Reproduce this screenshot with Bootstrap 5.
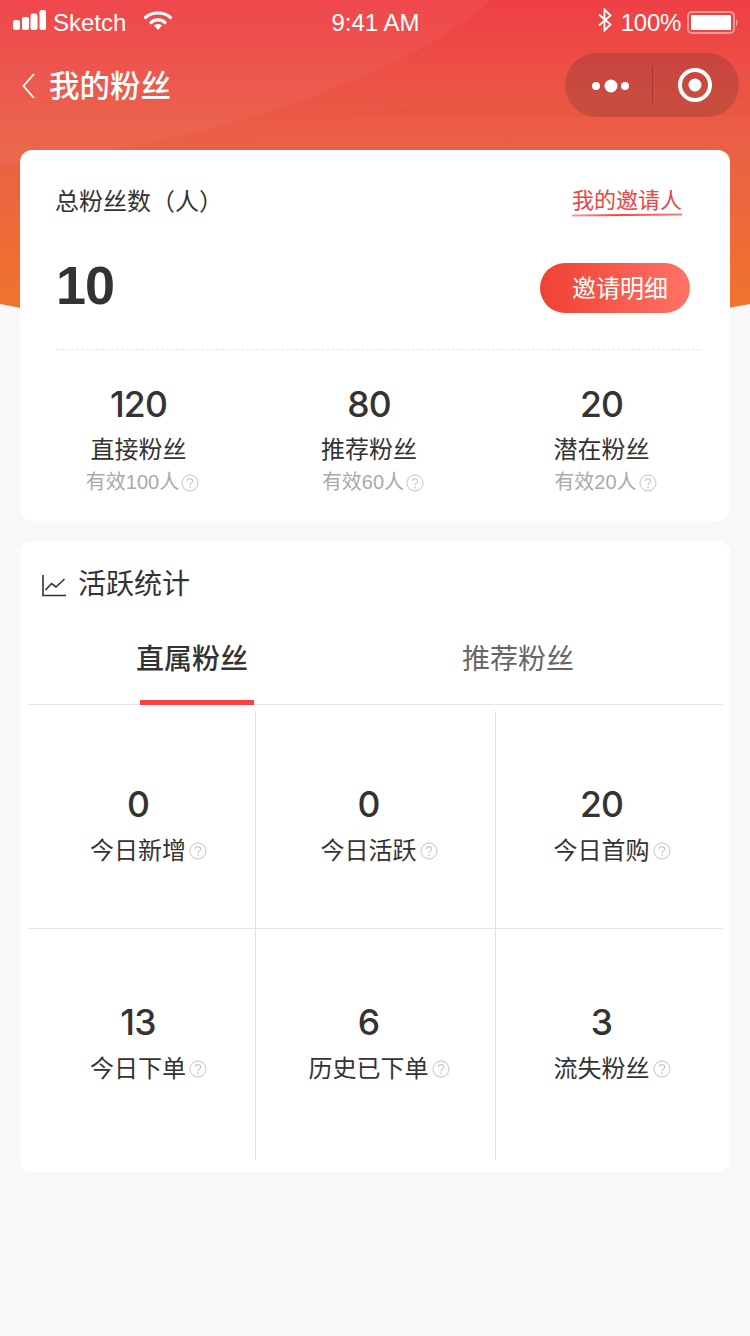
<!DOCTYPE html>
<html lang="zh-CN">
<head>
  <meta charset="UTF-8" />
  <title>我的粉丝</title>
  <meta name="viewport" content="width=device-width, initial-scale=1" />
  <link href="https://cdn.jsdelivr.net/npm/bootstrap@5.3.2/dist/css/bootstrap.min.css" rel="stylesheet" />
  <style>
    body {
      background-color: #f8f8f8;
      font-family: "Liberation Sans", "Noto Sans CJK SC", sans-serif;
      color: #333;
    }
    .page-wrap {
      position: relative;
      width: 750px;
      height: 1336px;
      overflow: hidden;
    }
    .hero-bg {
      position: absolute;
      top: 0;
      left: 0;
      z-index: 0;
    }
    .page-content {
      position: relative;
      z-index: 1;
    }

    .status-bar {
      display: grid;
      grid-template-columns: 1fr auto 1fr;
      height: 46px;
      padding: 0 11px 0 13px;
      color: #fff;
      font-size: 24px;
      line-height: 46px;
    }
    .status-bar svg {
      flex: none;
    }
    .status-signal {
      margin-top: -4px;
    }
    .status-name {
      margin-left: 6px;
    }
    .status-wifi {
      margin-top: -4px;
      margin-left: 18px;
    }
    .status-time {
      margin-left: -1px;
    }
    .status-blue {
      margin-top: -6px;
    }
    .status-pct {
      margin-left: 8px;
      letter-spacing: -.3px;
    }
    .status-batt {
      margin-left: 6px;
      margin-top: -1px;
    }
    .nav-title {
      height: 104px;
      padding: 7px 11px 0 22px;
    }
    .nav-title h1 {
      margin: 0 0 0 14px;
      font-size: 30.500px;
      font-weight: 500;
      line-height: 66px;
      color: #fff;
    }
    .capsule {
      width: 174px;
      height: 64px;
      border-radius: 32px;
      background: rgba(60, 40, 40, .2);
    }

    .panel {
      margin: 0 20px;
      border: 0;
      border-radius: 12px;
      background: #fff;
    }
    .total-head {
      padding: 35px 48px 0 35px;
      height: 68px;
      font-size: 24px;
      line-height: 34px;
    }
    .inviter {
      position: relative;
      height: 30px;
      margin-top: -1px;
      font-size: 22px;
      color: #ee4444;
    }
    .inviter::after {
      content: "";
      position: absolute;
      left: 0;
      right: 0;
      bottom: -1px;
      height: 1.500px;
      background: linear-gradient(90deg, #f79a9a, #f04848 40%, #f47c7c);
      transform: rotate(-.6deg);
    }
    .total-row {
      margin-top: 45px;
      padding: 0 40px 0 36px;
      height: 50px;
    }
    .total-num {
      margin-bottom: 6px;
      font-size: 54px;
      font-weight: 700;
      line-height: 44px;
      letter-spacing: -1px;
    }
    .invite-btn {
      width: 150px;
      height: 50px;
      padding: 2px 0 0 32px;
      border: 0;
      border-radius: 25px;
      background: linear-gradient(90deg, #ef4133, #fe7366);
      color: #fff;
      font-size: 24px;
      line-height: 48px;
      text-align: left;
    }
    .dash-line {
      margin: 36px 30px 0 36px;
      border-top: 1px dashed #e5e5e5;
    }

    .three-cols {
      display: grid;
      grid-template-columns: 228px 240px 227px;
      margin: 0 7px 0 8px;
    }
    .stat-num {
      margin-bottom: -1px;
      font-family: Inter, "Liberation Sans", sans-serif;
      font-size: 35.500px;
      font-weight: 500;
      line-height: 44px;
      letter-spacing: -.8px;
    }
    .stat-label {
      font-size: 24px;
      line-height: 34px;
    }
    .stat-sub {
      font-size: 20px;
      line-height: 28px;
      color: #aaa;
    }
    .top-stats {
      margin-top: 33px;
      padding-bottom: 25px;
    }
    .top-stats .stat-label {
      margin-top: 7px;
    }
    .top-stats .stat-sub {
      margin-top: 1px;
      padding-left: 8px;
    }
    .cell-a { padding-right: 7px; }
    .cell-b { padding-right: 14px; }
    .cell-c { padding-right: 16px; }

    .help-mark {
      display: inline-block;
      width: 18px;
      height: 18px;
      margin-left: 2px;
      vertical-align: -3px;
    }
    .stat-label .help-mark {
      margin-left: 3px;
      margin-right: -21px;
      vertical-align: -1px;
    }

    .section-head {
      padding: 24px 0 0 22px;
      font-size: 28px;
      line-height: 40px;
    }
    .section-head svg {
      margin-right: 12px;
    }
    .tab-row {
      display: grid;
      grid-template-columns: 328px 324px;
      margin: 15px 7px 0 8px;
      padding: 20px 0 24px;
      border-bottom: 1px solid #e5e5e5;
      position: relative;
      font-size: 28px;
      line-height: 40px;
      color: #666;
    }
    .tab-active {
      font-weight: 500;
      color: #333;
    }
    .tab-row::after {
      content: "";
      position: absolute;
      left: 112px;
      bottom: -1px;
      width: 114px;
      height: 5px;
      background: #ff4040;
    }
    .data-grid {
      margin-top: 6px;
      padding-bottom: 12px;
    }
    .grid-cell {
      padding-top: 72px;
      height: 218px;
      border-bottom: 1px solid #e5e5e5;
    }
    .grid-cell.low {
      height: 231px;
      padding-top: 72px;
      border-bottom: 0;
    }
    .grid-cell .stat-label {
      margin-top: 8px;
    }
    .line-right {
      border-right: 1px solid #e0e0e0;
    }
  </style>
</head>
<body>
  <div class="page-wrap">
    <svg class="hero-bg" width="750" height="380" viewBox="0 0 750 380" aria-hidden="true">
      <defs>
        <linearGradient id="heroGrad" x1="0" y1="0" x2="0" y2="1">
          <stop offset="0" stop-color="#ef3f44" />
          <stop offset=".42" stop-color="#ea6046" />
          <stop offset=".85" stop-color="#ef722e" />
        </linearGradient>
      </defs>
      <path d="M0 304 Q375 379 750 304 V0 H0 Z" fill="url(#heroGrad)" />
      <path d="M0 165 C170 150 390 90 492 0 H0 Z" fill="#fff" opacity=".045" />
      <path d="M310 117 H750 V106 H420 Z" fill="#d94a30" opacity=".1" />
    </svg>

    <div class="page-content">
      <div class="status-bar">
        <div class="d-flex align-items-center">
          <svg class="status-signal" width="34" height="22" viewBox="0 0 34 22" aria-hidden="true">
            <rect x="0" y="10" width="7" height="10" rx="2.500" fill="#fff" />
            <rect x="9" y="7" width="7" height="13" rx="2" fill="#fff" />
            <rect x="17.500" y="3.500" width="7" height="16.500" rx="2" fill="#fff" />
            <rect x="26.500" y="0" width="6.500" height="20" rx="2" fill="#fff" />
          </svg>
          <span class="status-name">Sketch</span>
          <svg class="status-wifi" width="28" height="22" viewBox="1 0 28 22" aria-hidden="true">
            <path d="M2.500 7.500 C9 1.500 21 1.500 27.500 7.500" fill="none" stroke="#fff" stroke-width="3.200" stroke-linecap="round" />
            <path d="M8 12.500 C11.500 9 18.500 9 22 12.500" fill="none" stroke="#fff" stroke-width="3.200" stroke-linecap="round" />
            <path d="M11 15.500 L15 20 L19 15.500 C17 13.500 13 13.500 11 15.500 Z" fill="#fff" />
          </svg>
        </div>
        <div class="status-time">9:41 AM</div>
        <div class="d-flex align-items-center justify-content-end">
          <svg class="status-blue" width="16" height="24" viewBox="0 0 16 24" aria-hidden="true">
            <path d="M2 6.500 L13.500 16.500 L7.500 22.500 V1.500 L13.500 7.500 L2 17.500" fill="none" stroke="#fff" stroke-width="1.800" />
          </svg>
          <span class="status-pct">100%</span>
          <svg class="status-batt" width="52" height="24" viewBox="0 0 52 24" aria-hidden="true">
            <rect x="1" y="1" width="46" height="21" rx="4" fill="none" stroke="#fff" stroke-opacity=".45" stroke-width="2" />
            <rect x="4" y="4" width="40" height="15" rx="1" fill="#fff" />
            <path d="M49 8 C51 9 51 14 49 15 Z" fill="#fff" fill-opacity=".5" />
          </svg>
        </div>
      </div>

      <div class="nav-title d-flex align-items-start justify-content-between">
        <div class="d-flex align-items-center" style="height:66px">
          <svg width="13" height="26" viewBox="0 0 13 26" aria-hidden="true">
            <path d="M12 1 L1.500 13 L12 25" fill="none" stroke="#fff" stroke-width="1.800" />
          </svg>
          <h1>我的粉丝</h1>
        </div>
        <div class="capsule d-flex align-items-center">
          <svg width="174" height="64" viewBox="0 0 174 64" aria-hidden="true">
            <circle cx="31" cy="33" r="4" fill="#fff" />
            <circle cx="46" cy="33" r="6.500" fill="#fff" />
            <circle cx="60" cy="33" r="4" fill="#fff" />
            <rect x="87" y="13" width="1" height="37" fill="#a8382f" />
            <circle cx="130" cy="32" r="15" fill="none" stroke="#fff" stroke-width="4" />
            <circle cx="130" cy="32" r="6.500" fill="#fff" />
          </svg>
        </div>
      </div>

      <div class="card panel">
        <div class="total-head d-flex justify-content-between">
          <span>总粉丝数（人）</span>
          <span class="inviter">我的邀请人</span>
        </div>
        <div class="total-row d-flex align-items-center justify-content-between">
          <div class="total-num">10</div>
          <button class="invite-btn" type="button">邀请明细</button>
        </div>
        <div class="dash-line"></div>
        <div class="three-cols top-stats text-center">
          <div class="cell-a">
            <div class="stat-num">120</div>
            <div class="stat-label">直接粉丝</div>
            <div class="stat-sub">有效100人<svg class="help-mark" viewBox="0 0 18 18"><use href="#helpIcon" /></svg></div>
          </div>
          <div class="cell-b">
            <div class="stat-num">80</div>
            <div class="stat-label">推荐粉丝</div>
            <div class="stat-sub">有效60人<svg class="help-mark" viewBox="0 0 18 18"><use href="#helpIcon" /></svg></div>
          </div>
          <div class="cell-c">
            <div class="stat-num">20</div>
            <div class="stat-label">潜在粉丝</div>
            <div class="stat-sub">有效20人<svg class="help-mark" viewBox="0 0 18 18"><use href="#helpIcon" /></svg></div>
          </div>
        </div>
      </div>

      <div class="card panel" style="margin-top:20px">
        <div class="section-head d-flex align-items-center">
          <svg width="24" height="24" viewBox="0 0 24 24" aria-hidden="true">
            <path d="M1 2 V22.500 H24" fill="none" stroke="#333" stroke-width="1.600" />
            <path d="M3.500 17 L9.500 10.500 L14 14 L22.500 6" fill="none" stroke="#333" stroke-width="1.600" />
          </svg>
          <span>活跃统计</span>
        </div>
        <div class="tab-row text-center">
          <div class="tab-active">直属粉丝</div>
          <div>推荐粉丝</div>
        </div>
        <div class="three-cols data-grid text-center">
          <div class="grid-cell cell-a line-right">
            <div class="stat-num">0</div>
            <div class="stat-label">今日新增<svg class="help-mark" viewBox="0 0 18 18"><use href="#helpIcon" /></svg></div>
          </div>
          <div class="grid-cell cell-b line-right">
            <div class="stat-num">0</div>
            <div class="stat-label">今日活跃<svg class="help-mark" viewBox="0 0 18 18"><use href="#helpIcon" /></svg></div>
          </div>
          <div class="grid-cell cell-c">
            <div class="stat-num">20</div>
            <div class="stat-label">今日首购<svg class="help-mark" viewBox="0 0 18 18"><use href="#helpIcon" /></svg></div>
          </div>
          <div class="grid-cell low cell-a line-right">
            <div class="stat-num">13</div>
            <div class="stat-label">今日下单<svg class="help-mark" viewBox="0 0 18 18"><use href="#helpIcon" /></svg></div>
          </div>
          <div class="grid-cell low cell-b line-right">
            <div class="stat-num">6</div>
            <div class="stat-label">历史已下单<svg class="help-mark" viewBox="0 0 18 18"><use href="#helpIcon" /></svg></div>
          </div>
          <div class="grid-cell low cell-c">
            <div class="stat-num">3</div>
            <div class="stat-label">流失粉丝<svg class="help-mark" viewBox="0 0 18 18"><use href="#helpIcon" /></svg></div>
          </div>
        </div>
      </div>
    </div>
  </div>

  <svg width="0" height="0" class="d-block" aria-hidden="true">
    <symbol id="helpIcon" viewBox="0 0 18 18">
      <circle cx="9" cy="9" r="8" fill="none" stroke="#d4d4d4" stroke-width="1.300" />
      <path d="M6.300 7 C6.300 3.900 11.700 3.900 11.700 7 C11.700 8.900 9 8.900 9 11.200" fill="none" stroke="#c8c8c8" stroke-width="1.200" />
      <circle cx="9" cy="13.500" r=".9" fill="#c8c8c8" />
    </symbol>
  </svg>

  <script src="https://cdn.jsdelivr.net/npm/bootstrap@5.3.2/dist/js/bootstrap.bundle.min.js"></script>
</body>
</html>
